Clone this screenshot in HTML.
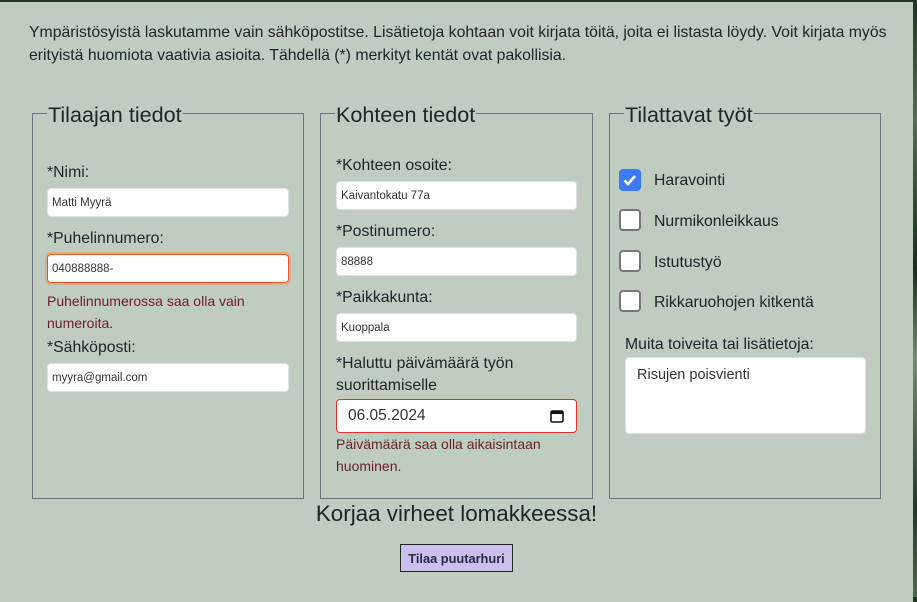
<!DOCTYPE html>
<html><head><meta charset="utf-8"><style>
*{box-sizing:border-box;margin:0;padding:0}
body{width:917px;height:597px;overflow:hidden;background:linear-gradient(180deg,#1f3522,#4f6f50 20%,#1a2d1c 45%,#6f8f6f 60%,#22392a 85%,#4a6a4c);font-family:"Liberation Sans",sans-serif;color:#212529;position:relative}
#panel{position:absolute;left:0;top:2px;width:913px;height:600px;background:#bfcdc1}
.a{position:absolute;white-space:nowrap}
.t{font-size:15.8px}
.fs{position:absolute;top:113px;height:386px;border:1px solid #6c757d}
.lg{position:absolute;top:-12px;left:14px;background:#bfcdc1;font-size:21.6px;padding:0 1px;line-height:26px}
.in{position:absolute;background:#fff;border:1px solid #dee2e6;border-radius:4px;font-size:11.5px;padding-left:4px;display:flex;align-items:center;color:#333}
.err{font-size:14px;color:#6b1e2b}
.cb{position:absolute;left:619px;width:22px;height:22px;border:2px solid #777;border-radius:4px;background:#fff}
</style></head><body>
<div id="panel"></div>
<div class="a t" style="left:29px;top:24px">Ympäristösyistä laskutamme vain sähköpostitse. Lisätietoja kohtaan voit kirjata töitä, joita ei listasta löydy. Voit kirjata myös</div>
<div class="a t" style="left:29px;top:47px">erityistä huomiota vaativia asioita. Tähdellä (*) merkityt kentät ovat pakollisia.</div>

<div class="fs" style="left:32px;width:272px"><div class="lg">Tilaajan tiedot</div></div>
<div class="fs" style="left:320px;width:273px"><div class="lg">Kohteen tiedot</div></div>
<div class="fs" style="left:609px;width:272px"><div class="lg">Tilattavat työt</div></div>

<div class="a t" style="left:47px;top:164px">*Nimi:</div>
<div class="in" style="left:47px;top:188px;width:242px;height:29px">Matti Myyrä</div>
<div class="a t" style="left:47px;top:230px">*Puhelinnumero:</div>
<div class="in" style="left:47px;top:254px;width:242px;height:29px;border:1px solid #e8572b;box-shadow:0 0 0 2px #d1ad9a">040888888-</div>
<div class="a err" style="left:47px;top:293px">Puhelinnumerossa saa olla vain</div>
<div class="a err" style="left:47px;top:315px">numeroita.</div>
<div class="a t" style="left:47px;top:339px">*Sähköposti:</div>
<div class="in" style="left:47px;top:363px;width:242px;height:29px">myyra@gmail.com</div>

<div class="a t" style="left:336px;top:157px">*Kohteen osoite:</div>
<div class="in" style="left:336px;top:181px;width:241px;height:29px">Kaivantokatu 77a</div>
<div class="a t" style="left:336px;top:223px">*Postinumero:</div>
<div class="in" style="left:336px;top:247px;width:241px;height:29px">88888</div>
<div class="a t" style="left:336px;top:289px">*Paikkakunta:</div>
<div class="in" style="left:336px;top:313px;width:241px;height:29px">Kuoppala</div>
<div class="a t" style="left:336px;top:355px">*Haluttu päivämäärä työn</div>
<div class="a t" style="left:336px;top:377px">suorittamiselle</div>
<div class="in" style="left:336px;top:399px;width:241px;height:34px;border:1px solid #e0302a;font-size:15.5px;padding-left:11px">06.05.2024
<svg style="position:absolute;right:12px;top:9px" width="14" height="14" viewBox="0 0 14 14"><rect x="1" y="2" width="12" height="11" rx="1.5" fill="none" stroke="#111" stroke-width="1.6"/><rect x="1" y="2" width="12" height="3" fill="#111"/></svg></div>
<div class="a err" style="left:336px;top:436px">Päivämäärä saa olla aikaisintaan</div>
<div class="a err" style="left:336px;top:458px">huominen.</div>

<div class="cb" style="top:169px;background:#3b7bf5;border-color:#3b7bf5"><svg width="18" height="18" viewBox="0 0 18 18"><path d="M3.5 9.5l3.5 3.5 7-8" fill="none" stroke="#fff" stroke-width="2.6"/></svg></div>
<div class="a t" style="left:654px;top:172px">Haravointi</div>
<div class="cb" style="top:209px"></div>
<div class="a t" style="left:654px;top:213px">Nurmikonleikkaus</div>
<div class="cb" style="top:250px"></div>
<div class="a t" style="left:654px;top:254px">Istutustyö</div>
<div class="cb" style="top:290px"></div>
<div class="a t" style="left:654px;top:294px">Rikkaruohojen kitkentä</div>
<div class="a t" style="left:625px;top:336px">Muita toiveita tai lisätietoja:</div>
<div class="in" style="left:625px;top:357px;width:241px;height:77px;align-items:flex-start;padding:9px 11px;font-size:14.5px">Risujen poisvienti</div>

<div class="a" style="left:0;width:913px;text-align:center;top:501px;font-size:22.4px">Korjaa virheet lomakkeessa!</div>
<div class="a" style="left:400px;top:544px;width:113px;height:28px;background:#cbbfee;border:1px solid #1f2a24;font-size:12.8px;font-weight:bold;color:#2a2a40;display:flex;align-items:center;justify-content:center">Tilaa puutarhuri</div>
</body></html>
